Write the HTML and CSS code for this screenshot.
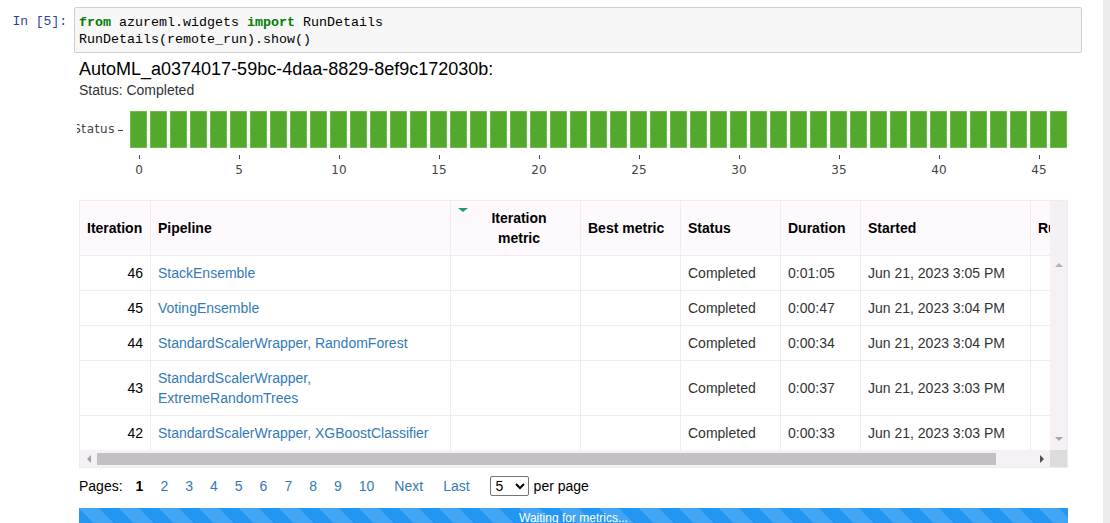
FILE: index.html
```html
<!DOCTYPE html>
<html>
<head>
<meta charset="utf-8">
<title>RunDetails</title>
<link rel="stylesheet" href="styles.css">
</head>
<body>
<div class="page">
  <main class="nb">
    <div class="cell">
      <div class="prompt">In&nbsp;[5]:</div>
      <pre class="code"><span class="kw">from</span> azureml.widgets <span class="kw">import</span> RunDetails
RunDetails(remote_run).show()</pre>
    </div>
    <div class="output">
      <div class="run-title">AutoML_a0374017-59bc-4daa-8829-8ef9c172030b:</div>
      <div class="run-status">Status: Completed</div>
      <svg class="chart" viewBox="0 0 991 82" width="991" height="82">
        <line class="grid-line" x1="53" y1="30.5" x2="991" y2="30.5"/>
        <g class="bars">
          <rect x="53.5" y="11.5" width="16" height="36"/>
          <rect x="73.5" y="11.5" width="16" height="36"/>
          <rect x="93.5" y="11.5" width="16" height="36"/>
          <rect x="113.5" y="11.5" width="16" height="36"/>
          <rect x="133.5" y="11.5" width="16" height="36"/>
          <rect x="153.5" y="11.5" width="16" height="36"/>
          <rect x="173.5" y="11.5" width="16" height="36"/>
          <rect x="193.5" y="11.5" width="16" height="36"/>
          <rect x="213.5" y="11.5" width="16" height="36"/>
          <rect x="233.5" y="11.5" width="16" height="36"/>
          <rect x="253.5" y="11.5" width="16" height="36"/>
          <rect x="273.5" y="11.5" width="16" height="36"/>
          <rect x="293.5" y="11.5" width="16" height="36"/>
          <rect x="313.5" y="11.5" width="16" height="36"/>
          <rect x="333.5" y="11.5" width="16" height="36"/>
          <rect x="353.5" y="11.5" width="16" height="36"/>
          <rect x="373.5" y="11.5" width="16" height="36"/>
          <rect x="393.5" y="11.5" width="16" height="36"/>
          <rect x="413.5" y="11.5" width="16" height="36"/>
          <rect x="433.5" y="11.5" width="16" height="36"/>
          <rect x="453.5" y="11.5" width="16" height="36"/>
          <rect x="473.5" y="11.5" width="16" height="36"/>
          <rect x="493.5" y="11.5" width="16" height="36"/>
          <rect x="513.5" y="11.5" width="16" height="36"/>
          <rect x="533.5" y="11.5" width="16" height="36"/>
          <rect x="553.5" y="11.5" width="16" height="36"/>
          <rect x="573.5" y="11.5" width="16" height="36"/>
          <rect x="593.5" y="11.5" width="16" height="36"/>
          <rect x="613.5" y="11.5" width="16" height="36"/>
          <rect x="633.5" y="11.5" width="16" height="36"/>
          <rect x="653.5" y="11.5" width="16" height="36"/>
          <rect x="673.5" y="11.5" width="16" height="36"/>
          <rect x="693.5" y="11.5" width="16" height="36"/>
          <rect x="713.5" y="11.5" width="16" height="36"/>
          <rect x="733.5" y="11.5" width="16" height="36"/>
          <rect x="753.5" y="11.5" width="16" height="36"/>
          <rect x="773.5" y="11.5" width="16" height="36"/>
          <rect x="793.5" y="11.5" width="16" height="36"/>
          <rect x="813.5" y="11.5" width="16" height="36"/>
          <rect x="833.5" y="11.5" width="16" height="36"/>
          <rect x="853.5" y="11.5" width="16" height="36"/>
          <rect x="873.5" y="11.5" width="16" height="36"/>
          <rect x="893.5" y="11.5" width="16" height="36"/>
          <rect x="913.5" y="11.5" width="16" height="36"/>
          <rect x="933.5" y="11.5" width="16" height="36"/>
          <rect x="953.5" y="11.5" width="16" height="36"/>
          <rect x="973.5" y="11.5" width="16" height="36"/>
        </g>
        <line class="tick" x1="41" y1="30.5" x2="46" y2="30.5"/>
        <text class="axis-label" x="38" y="33" text-anchor="end">Status</text>
        <g class="xticks">
          <line x1="62.5" y1="55" x2="62.5" y2="59"/>
          <line x1="162.5" y1="55" x2="162.5" y2="59"/>
          <line x1="262.5" y1="55" x2="262.5" y2="59"/>
          <line x1="362.5" y1="55" x2="362.5" y2="59"/>
          <line x1="462.5" y1="55" x2="462.5" y2="59"/>
          <line x1="562.5" y1="55" x2="562.5" y2="59"/>
          <line x1="662.5" y1="55" x2="662.5" y2="59"/>
          <line x1="762.5" y1="55" x2="762.5" y2="59"/>
          <line x1="862.5" y1="55" x2="862.5" y2="59"/>
          <line x1="962.5" y1="55" x2="962.5" y2="59"/>
        </g>
        <g class="xlabels" text-anchor="middle">
          <text x="62" y="74">0</text>
          <text x="162" y="74">5</text>
          <text x="262" y="74">10</text>
          <text x="362" y="74">15</text>
          <text x="462" y="74">20</text>
          <text x="562" y="74">25</text>
          <text x="662" y="74">30</text>
          <text x="762" y="74">35</text>
          <text x="862" y="74">40</text>
          <text x="962" y="74">45</text>
        </g>
      </svg>

      <div class="grid">
        <div class="grid-body">
          <div class="grid-view">
            <table class="runs">
              <thead>
                <tr>
                  <th class="c-iter">Iteration</th>
                  <th class="c-pipe">Pipeline</th>
                  <th class="c-metric sorted"><span class="sort-arrow"></span>Iteration<br>metric</th>
                  <th class="c-best">Best metric</th>
                  <th class="c-status">Status</th>
                  <th class="c-dur">Duration</th>
                  <th class="c-start">Started</th>
                  <th class="c-run">Run Id</th>
                </tr>
              </thead>
              <tbody>
                <tr>
                  <td class="num">46</td>
                  <td><a href="#">StackEnsemble</a></td>
                  <td></td><td></td>
                  <td>Completed</td>
                  <td>0:01:05</td>
                  <td>Jun 21, 2023 3:05 PM</td>
                  <td></td>
                </tr>
                <tr>
                  <td class="num">45</td>
                  <td><a href="#">VotingEnsemble</a></td>
                  <td></td><td></td>
                  <td>Completed</td>
                  <td>0:00:47</td>
                  <td>Jun 21, 2023 3:04 PM</td>
                  <td></td>
                </tr>
                <tr>
                  <td class="num">44</td>
                  <td><a href="#">StandardScalerWrapper, RandomForest</a></td>
                  <td></td><td></td>
                  <td>Completed</td>
                  <td>0:00:34</td>
                  <td>Jun 21, 2023 3:04 PM</td>
                  <td></td>
                </tr>
                <tr>
                  <td class="num">43</td>
                  <td><a href="#">StandardScalerWrapper,<br>ExtremeRandomTrees</a></td>
                  <td></td><td></td>
                  <td>Completed</td>
                  <td>0:00:37</td>
                  <td>Jun 21, 2023 3:03 PM</td>
                  <td></td>
                </tr>
                <tr>
                  <td class="num">42</td>
                  <td><a href="#">StandardScalerWrapper, XGBoostClassifier</a></td>
                  <td></td><td></td>
                  <td>Completed</td>
                  <td>0:00:33</td>
                  <td>Jun 21, 2023 3:03 PM</td>
                  <td></td>
                </tr>
              </tbody>
            </table>
          </div>
          <div class="vscroll">
            <div class="vs-head"></div>
            <div class="vs-track">
              <span class="arrow-up"></span>
              <span class="arrow-down"></span>
            </div>
          </div>
        </div>
        <div class="hscroll">
          <div class="hs-track">
            <div class="hs-btn"><span class="arrow-left"></span></div>
            <div class="hs-thumb"></div>
            <div class="hs-fill"></div>
            <div class="hs-btn"><span class="arrow-right"></span></div>
          </div>
          <div class="hs-corner"></div>
        </div>
      </div>

      <div class="pager">
        <span class="pages-label">Pages:</span>
        <span class="pg current">1</span>
        <a class="pg" href="#">2</a>
        <a class="pg" href="#">3</a>
        <a class="pg" href="#">4</a>
        <a class="pg" href="#">5</a>
        <a class="pg" href="#">6</a>
        <a class="pg" href="#">7</a>
        <a class="pg" href="#">8</a>
        <a class="pg" href="#">9</a>
        <a class="pg" href="#">10</a>
        <a class="pg nav" href="#">Next</a>
        <a class="pg nav" href="#">Last</a>
        <select class="per-page"><option>5</option><option>10</option><option>20</option></select>
        <span class="per-page-label">per page</span>
      </div>

      <div class="progress">Waiting for metrics...</div>
    </div>
  </main>
  <div class="page-scroll"></div>
</div>
</body>
</html>
```
FILE: styles.css
```css
html, body {
  margin: 0;
  padding: 0;
  background: #fff;
}

body {
  font-family: "Liberation Sans", Arial, sans-serif;
  color: #000;
  overflow: hidden;
}

.page {
  display: flex;
  min-height: 523px;
}

.nb {
  flex: 1;
  padding-top: 7px;
}

.page-scroll {
  flex: none;
  width: 7px;
  background: #ebebeb;
}

/* code cell */
.cell {
  display: flex;
}

.prompt {
  flex: none;
  width: 74px;
  box-sizing: border-box;
  padding: 6px 7px 0 0;
  text-align: right;
  font: 13px/17px "Liberation Mono", monospace;
  color: #303f9f;
}

.code {
  margin: 0;
  width: 1008px;
  box-sizing: border-box;
  border: 1px solid #cfcfcf;
  border-radius: 2px;
  background: #f7f7f7;
  padding: 6px 4px 4px;
  font: 13.33px/17px "Liberation Mono", monospace;
  color: #000;
  white-space: pre;
}

.kw {
  color: #008000;
  font-weight: bold;
}

/* output */
.output {
  margin-left: 79px;
  width: 989px;
}

.run-title {
  margin-top: 6px;
  font-size: 18px;
  line-height: 21px;
  color: #000;
}

.run-status {
  margin-top: 2px;
  font-size: 14px;
  line-height: 17px;
  color: #333;
}

/* chart */
.chart {
  display: block;
  margin: 1px 0 0 -2px;
  width: 991px;
  height: 82px;
}

.grid-line {
  stroke: #eeeeee;
  stroke-width: 1;
}

.bars rect {
  fill: #53a92c;
  stroke: #6fbd4f;
  stroke-width: 1;
}

.tick,
.xticks line {
  stroke: #444;
  stroke-width: 1;
}

.axis-label,
.xlabels text {
  font-family: "DejaVu Sans", Verdana, sans-serif;
  font-size: 12px;
  fill: #444;
}

.axis-label {
  letter-spacing: 0.6px;
}

/* grid */
.grid {
  margin-top: 18px;
  border: 1px solid #efebef;
}

.grid-body {
  display: flex;
}

.grid-view {
  width: 970px;
  overflow: hidden;
}

.runs {
  border-collapse: separate;
  border-spacing: 0;
  table-layout: fixed;
  width: 1151px;
  font-size: 14px;
  line-height: 20px;
}

.runs th,
.runs td {
  box-sizing: border-box;
  padding: 7px;
  border-right: 1px solid #efebef;
  border-bottom: 1px solid #efebef;
  vertical-align: middle;
  text-align: left;
  color: #333;
}

.runs th {
  background: #fdf9fd;
  font-weight: bold;
  color: #000;
  white-space: nowrap;
}

.runs tbody tr:last-child td {
  border-bottom: none;
}

.c-iter { width: 71px; }
.c-pipe { width: 300px; }
.c-metric { width: 130px; }
.c-best { width: 100px; }
.c-status { width: 100px; }
.c-dur { width: 80px; }
.c-start { width: 170px; }
.c-run { width: 200px; }

.runs th.sorted {
  position: relative;
  text-align: center;
  padding-left: 14px;
}

.sort-arrow {
  position: absolute;
  left: 7px;
  top: 7px;
  width: 0;
  height: 0;
  border-left: 5px solid transparent;
  border-right: 5px solid transparent;
  border-top: 4px solid #1f9e6a;
}

.runs td.num {
  text-align: right;
  color: #000;
}

.runs a {
  color: #337ab7;
  text-decoration: none;
}

/* vertical scrollbar */
.vscroll {
  flex: none;
  width: 17px;
  display: flex;
  flex-direction: column;
}

.vs-head {
  height: 55px;
  background: #f4f0f4;
}

.vs-track {
  flex: 1;
  background: #f5f1f5;
  display: flex;
  flex-direction: column;
  justify-content: space-between;
  align-items: center;
  padding: 7px 0 9px;
}

.arrow-up {
  width: 0;
  height: 0;
  border-left: 4px solid transparent;
  border-right: 4px solid transparent;
  border-bottom: 4px solid #b4b4b4;
}

.arrow-down {
  width: 0;
  height: 0;
  border-left: 4px solid transparent;
  border-right: 4px solid transparent;
  border-top: 4px solid #a8a8a8;
}

/* horizontal scrollbar */
.hscroll {
  display: flex;
  height: 17px;
}

.hs-track {
  width: 970px;
  background: #f5f1f5;
  display: flex;
  align-items: center;
}

.hs-btn {
  flex: none;
  width: 17px;
  height: 17px;
  display: flex;
  justify-content: center;
  align-items: center;
}

.hs-thumb {
  flex: none;
  width: 899px;
  height: 12px;
  background: #c2c0c4;
}

.hs-fill {
  flex: 1;
}

.arrow-left {
  width: 0;
  height: 0;
  border-top: 4px solid transparent;
  border-bottom: 4px solid transparent;
  border-right: 4px solid #a3a3a3;
}

.arrow-right {
  width: 0;
  height: 0;
  border-top: 4px solid transparent;
  border-bottom: 4px solid transparent;
  border-left: 4px solid #505050;
}

.hs-corner {
  flex: none;
  width: 17px;
  background: #dcdcdc;
}

/* pager */
.pager {
  display: flex;
  align-items: center;
  height: 20px;
  margin-top: 8px;
  font-size: 14px;
  color: #000;
}

.pg {
  margin-left: 17px;
  color: #337ab7;
  text-decoration: none;
}

.pg.current {
  margin-left: 13px;
  font-weight: bold;
  color: #000;
}

.pg.nav {
  margin-left: 20px;
}

.per-page {
  margin-left: 20px;
  width: 39px;
  height: 20px;
  box-sizing: border-box;
  border: 1px solid #767676;
  border-radius: 2px;
  background: #fff;
  font: 14px "Liberation Sans", Arial, sans-serif;
  color: #000;
  padding: 0 0 0 1px;
}

.per-page-label {
  margin-left: 5px;
}

/* progress */
.progress {
  margin-top: 12px;
  height: 20px;
  line-height: 20px;
  background-color: #2196f3;
  background-image: linear-gradient(45deg,
    rgba(255, 255, 255, 0.15) 25%, transparent 25%,
    transparent 50%, rgba(255, 255, 255, 0.15) 50%,
    rgba(255, 255, 255, 0.15) 75%, transparent 75%, transparent);
  background-size: 40px 40px;
  color: #fff;
  text-align: center;
  font-size: 12px;
}
```
